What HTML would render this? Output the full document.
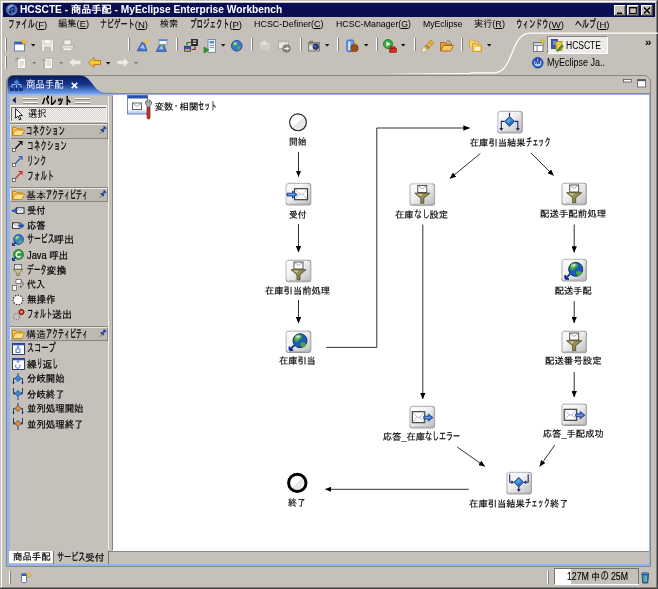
<!DOCTYPE html>
<html lang="ja"><head><meta charset="utf-8"><title>HCSCTE</title><style>
html,body{margin:0;padding:0}
body{width:658px;height:589px;overflow:hidden;position:relative;background:#c5c1ba;font-family:"Liberation Sans","IPAGothic","Noto Sans CJK JP",sans-serif}
div,svg,span.t{position:absolute}
span.t{white-space:nowrap;transform-origin:0 50%;display:block;filter:blur(0.3px)}
span.k{font-size:1.2em;display:inline-block;transform-origin:0 50%}
svg{overflow:visible}
svg text{font-family:"Liberation Sans","IPAGothic","Noto Sans CJK JP",sans-serif}
</style></head>
<body>
<div style="left:0px;top:0px;width:658px;height:589px;background:#c5c1ba;"></div>
<div style="left:1px;top:1px;width:656px;height:1px;background:#fff;"></div>
<div style="left:1px;top:1px;width:1px;height:587px;background:#fff;"></div>
<div style="left:0px;top:588px;width:658px;height:1px;background:#404040;"></div>
<div style="left:657px;top:0px;width:1px;height:589px;background:#404040;"></div>
<div style="left:1px;top:587px;width:656px;height:1px;background:#808080;"></div>
<div style="left:656px;top:1px;width:1px;height:587px;background:#808080;"></div>
<div style="left:3px;top:3px;width:652px;height:13.7px;background:#090f52;"></div>
<svg style="left:5.5px;top:4.3px" width="11.5" height="11.5" viewBox="0 0 13 13"><circle cx="6.500" cy="6.500" r="6" fill="#4468b4" stroke="#7a94cc" stroke-width="0.8"/><path d="M2.500 5.500a4.500 4.500 0 0 1 5-3" stroke="#a8c0ec" stroke-width="1.200" fill="none"/><path d="M5.500 9.500V4.500l3.500-1v4.500" stroke="#0a1a50" stroke-width="1" fill="none"/><circle cx="4.600" cy="9.500" r="1.300" fill="#0a1a50"/><circle cx="8.200" cy="8.200" r="1.200" fill="#0a1a50"/></svg>
<span class="t" style="left:19.5px;top:3.475px;font-size:10.5px;line-height:13.65px;color:#fff;font-weight:bold;transform:scaleX(0.971);">HCSCTE - 商品手配 - MyEclipse Enterprise Workbench</span>
<div style="left:614px;top:5px;width:12px;height:11px;background:#c5c1ba;"></div>
<div style="left:614px;top:5px;width:11px;height:1px;background:#fff;"></div>
<div style="left:614px;top:5px;width:1px;height:10px;background:#fff;"></div>
<div style="left:614px;top:15px;width:12px;height:1px;background:#404040;"></div>
<div style="left:625px;top:5px;width:1px;height:11px;background:#404040;"></div>
<div style="left:615px;top:14px;width:10px;height:1px;background:#808080;"></div>
<div style="left:624px;top:6px;width:1px;height:9px;background:#808080;"></div>
<svg style="left:614px;top:5px" width="12" height="11" viewBox="0 0 12 11"><rect x="3" y="7.5" width="5" height="1.6" fill="#000"/></svg>
<div style="left:626.5px;top:5px;width:12px;height:11px;background:#c5c1ba;"></div>
<div style="left:626.5px;top:5px;width:11px;height:1px;background:#fff;"></div>
<div style="left:626.5px;top:5px;width:1px;height:10px;background:#fff;"></div>
<div style="left:626.5px;top:15px;width:12px;height:1px;background:#404040;"></div>
<div style="left:637.5px;top:5px;width:1px;height:11px;background:#404040;"></div>
<div style="left:627.5px;top:14px;width:10px;height:1px;background:#808080;"></div>
<div style="left:636.5px;top:6px;width:1px;height:9px;background:#808080;"></div>
<svg style="left:626.5px;top:5px" width="12" height="11" viewBox="0 0 12 11"><rect x="2.7" y="2.5" width="6.6" height="6" fill="none" stroke="#000" stroke-width="1"/><rect x="2.2" y="2" width="7.6" height="1.4" fill="#000"/></svg>
<div style="left:640.5px;top:5px;width:12px;height:11px;background:#c5c1ba;"></div>
<div style="left:640.5px;top:5px;width:11px;height:1px;background:#fff;"></div>
<div style="left:640.5px;top:5px;width:1px;height:10px;background:#fff;"></div>
<div style="left:640.5px;top:15px;width:12px;height:1px;background:#404040;"></div>
<div style="left:651.5px;top:5px;width:1px;height:11px;background:#404040;"></div>
<div style="left:641.5px;top:14px;width:10px;height:1px;background:#808080;"></div>
<div style="left:650.5px;top:6px;width:1px;height:9px;background:#808080;"></div>
<svg style="left:640.5px;top:5px" width="12" height="11" viewBox="0 0 12 11"><path d="M3 2.5l6 6M9 2.5l-6 6" stroke="#000" stroke-width="1.5"/></svg>
<span class="t" style="left:8.3px;top:18.36px;font-size:9.6px;line-height:12.48px;color:#000;"><span class="k" style="transform:scaleX(0.580);margin-right:-19.34px;-webkit-text-stroke:0.25px currentColor">ファイル</span>(<u>F</u>)</span>
<span class="t" style="left:58px;top:18.36px;font-size:9.6px;line-height:12.48px;color:#000;transform:scaleX(0.969);">編集(<u>E</u>)</span>
<span class="t" style="left:100px;top:18.36px;font-size:9.6px;line-height:12.48px;color:#000;"><span class="k" style="transform:scaleX(0.602);margin-right:-22.92px;-webkit-text-stroke:0.24px currentColor">ナビゲート</span>(<u>N</u>)</span>
<span class="t" style="left:160px;top:18.36px;font-size:9.6px;line-height:12.48px;color:#000;transform:scaleX(0.938);">検索</span>
<span class="t" style="left:190px;top:18.36px;font-size:9.6px;line-height:12.48px;color:#000;"><span class="k" style="transform:scaleX(0.567);margin-right:-29.91px;-webkit-text-stroke:0.26px currentColor">プロジェクト</span>(<u>P</u>)</span>
<span class="t" style="left:254px;top:18.36px;font-size:9.6px;line-height:12.48px;color:#000;transform:scaleX(0.931);">HCSC-Definer(<u>C</u>)</span>
<span class="t" style="left:335.5px;top:18.36px;font-size:9.6px;line-height:12.48px;color:#000;transform:scaleX(0.913);">HCSC-Manager(<u>G</u>)</span>
<span class="t" style="left:422.7px;top:18.36px;font-size:9.6px;line-height:12.48px;color:#000;transform:scaleX(0.904);">MyEclipse</span>
<span class="t" style="left:474px;top:18.36px;font-size:9.6px;line-height:12.48px;color:#000;transform:scaleX(0.953);">実行(<u>R</u>)</span>
<span class="t" style="left:516px;top:18.36px;font-size:9.6px;line-height:12.48px;color:#000;"><span class="k" style="transform:scaleX(0.565);margin-right:-25.05px;-webkit-text-stroke:0.26px currentColor">ウィンドウ</span>(<u>W</u>)</span>
<span class="t" style="left:575px;top:18.36px;font-size:9.6px;line-height:12.48px;color:#000;"><span class="k" style="transform:scaleX(0.612);margin-right:-13.39px;-webkit-text-stroke:0.23px currentColor">ヘルプ</span>(<u>H</u>)</span>
<div style="left:5px;top:38.3px;width:1px;height:13px;background:#fff;"></div>
<div style="left:6px;top:38.3px;width:1px;height:13px;background:#808080;"></div>
<div style="left:5px;top:55.8px;width:1px;height:13px;background:#fff;"></div>
<div style="left:6px;top:55.8px;width:1px;height:13px;background:#808080;"></div>
<svg style="left:14px;top:39px" width="13" height="13" viewBox="0 0 13 13"><rect x="0.5" y="3" width="10" height="9" fill="#fff" stroke="#6a7fb0"/><rect x="0.5" y="3" width="10" height="2.5" fill="#3b62b8"/><path d="M10 0l.8 2 2 .3-1.5 1.3.4 2L10 4.6 8.2 5.6l.4-2L7.1 2.3l2-.3z" fill="#f2c230" stroke="#c89a10" stroke-width=".4"/></svg>
<svg style="left:30.8px;top:44px" width="4.4" height="2.6" viewBox="0 0 4.4 2.6"><path d="M0 0h4.400L2.200 2.600z" fill="#000"/></svg>
<svg style="left:41px;top:39px" width="13" height="13" viewBox="0 0 13 13"><rect x="0.5" y="0.5" width="12" height="12" fill="#eeedea" stroke="#bab7b0"/><rect x="3" y="0.5" width="7" height="4.5" fill="#f6f5f2" stroke="#b8b4ac" stroke-width=".6"/><rect x="3" y="7.5" width="7" height="5" fill="#c4c0b8"/></svg>
<svg style="left:61px;top:39px" width="13" height="13" viewBox="0 0 13 13"><rect x="3" y="1" width="7" height="5" fill="#f2f1ee" stroke="#b0aca4" stroke-width=".8"/><rect x="0.5" y="6" width="12" height="5" fill="#e0ddd6" stroke="#aeaaa2" stroke-width=".8"/><rect x="2.5" y="9" width="8" height="2.5" fill="#f4f3f0" stroke="#b8b4ac" stroke-width=".5"/></svg>
<div style="left:128px;top:38.3px;width:1px;height:13px;background:#fff;"></div>
<div style="left:129px;top:38.3px;width:1px;height:13px;background:#808080;"></div>
<svg style="left:136px;top:39px" width="13" height="13" viewBox="0 0 13 13"><path d="M1 12L6 3l3 2 2 7z" fill="#4a78c8" stroke="#2a4a90" stroke-width=".6"/><path d="M4 9l3-4 2 5z" fill="#a8c4f0"/><path d="M10.5 0l.7 1.8 1.8.2-1.3 1.2.3 1.8-1.5-.9-1.6.9.3-1.8L7.9 2l1.9-.2z" fill="#f2c230"/></svg>
<svg style="left:155px;top:39px" width="13" height="13" viewBox="0 0 13 13"><path d="M1 12.500L5.500 4.500l3.500 1.500 2.500 6.500z" fill="#4a78c8" stroke="#2a4a90" stroke-width=".6"/><path d="M4 10l2.500-4 2 4.500z" fill="#a8c4f0"/><rect x="4" y="0.500" width="8" height="5" fill="#f4f6fc" stroke="#6a80b0" stroke-width=".7"/><rect x="4" y="0.500" width="8" height="1.500" fill="#5a80d0"/><circle cx="7" cy="6.500" r="1.200" fill="#58b848"/></svg>
<div style="left:176px;top:38.3px;width:1px;height:13px;background:#fff;"></div>
<div style="left:177px;top:38.3px;width:1px;height:13px;background:#808080;"></div>
<svg style="left:184px;top:38.5px" width="14" height="13" viewBox="0 0 14 13"><rect x="7.500" y="0.300" width="6" height="6.500" fill="#222" stroke="#000" stroke-width=".5"/><rect x="8.800" y="1.400" width="3.400" height="1.200" fill="#e8e8e8"/><rect x="8.800" y="3.800" width="3.400" height="1.200" fill="#e8e8e8"/><rect x="0.300" y="7.200" width="6.400" height="5" fill="#2a58b0" stroke="#1a2a60" stroke-width=".6"/><rect x="0.800" y="10" width="5.400" height="1.800" fill="#e8a030"/><path d="M3 6.500V3.500H7" stroke="#1a7a2a" stroke-width="1.200" fill="none"/><path d="M7.500 10.500h3.500V7.500" stroke="#8a1818" stroke-width="1.200" fill="none"/></svg>
<svg style="left:203.5px;top:38.5px" width="12" height="14" viewBox="0 0 12 14"><rect x="4" y="0.5" width="7.5" height="13" fill="#eef2fa" stroke="#6a7a9a" stroke-width=".8"/><rect x="5.5" y="2" width="4.5" height="2.5" fill="#5a8ad8"/><rect x="5.5" y="6" width="4.5" height="1" fill="#8a9ab8"/><rect x="5.5" y="8" width="4.5" height="1" fill="#8a9ab8"/><path d="M0 8l5 3-5 3z" fill="#2a9a2a" stroke="#1a6a1a" stroke-width=".5"/></svg>
<svg style="left:220.8px;top:44px" width="4.4" height="2.6" viewBox="0 0 4.4 2.6"><path d="M0 0h4.400L2.200 2.600z" fill="#000"/></svg>
<svg style="left:231px;top:39.5px" width="11.5" height="11.5" viewBox="0 0 11.5 11.5"><circle cx="5.75" cy="5.75" r="5.4" fill="#3a78d0" stroke="#1a3a80" stroke-width=".7"/><path d="M3 2.5c1.5-1 3-.5 3.5.5s-.5 2-1.500 2.500S3.500 7 3 6 2 3.500 3 2.500zM7 6.500c1-.5 2.500 0 2.500 1S8 10 7 9.500 6.500 7 7 6.500z" fill="#58b848"/><circle cx="4" cy="3.500" r="1.300" fill="#fff" opacity=".55"/></svg>
<div style="left:251px;top:38.3px;width:1px;height:13px;background:#fff;"></div>
<div style="left:252px;top:38.3px;width:1px;height:13px;background:#808080;"></div>
<svg style="left:260px;top:39.5px" width="12" height="11.5" viewBox="0 0 12 11.5"><path d="M0.500 11V2.500l2-.5 1.500-1.500 2 1 .5 1.500 3.500.500v2" fill="#e2e0dc" stroke="#cfccc6" stroke-width=".6"/><path d="M0.500 11l2-5.500h9l-2.500 5.500z" fill="#d2d0cc" stroke="#bcb9b3" stroke-width=".6"/></svg>
<svg style="left:278px;top:39.5px" width="13" height="13" viewBox="0 0 13 13"><rect x="0.500" y="0.500" width="10" height="8" fill="#e8e6e0" stroke="#a8a49c" stroke-width=".8"/><rect x="0.500" y="0.500" width="10" height="2" fill="#c0bcb4"/><circle cx="8.500" cy="8.500" r="3.800" fill="#8a8a8a" stroke="#606060" stroke-width=".6"/><path d="M6.500 8.500h4M9 6.800l1.700 1.700L9 10.200" stroke="#fff" stroke-width="1" fill="none"/></svg>
<div style="left:300px;top:38.3px;width:1px;height:13px;background:#fff;"></div>
<div style="left:301px;top:38.3px;width:1px;height:13px;background:#808080;"></div>
<svg style="left:308px;top:39.5px" width="12" height="11.5" viewBox="0 0 12 11.5"><rect x="0.500" y="2.500" width="11" height="8.500" fill="#c4c4c4" stroke="#6a6a6a" stroke-width=".8"/><rect x="0.500" y="2.500" width="11" height="2" fill="#8a8a8a"/><rect x="1.500" y="0.800" width="3.500" height="2" fill="#777"/><rect x="1.500" y="5.500" width="3" height="4" fill="#e4e4e4"/><circle cx="7.800" cy="6.800" r="2.700" fill="#1a3aa0" stroke="#222" stroke-width=".8"/><circle cx="7.300" cy="6.300" r=".9" fill="#6a9af0"/></svg>
<svg style="left:324.8px;top:44px" width="4.4" height="2.6" viewBox="0 0 4.4 2.6"><path d="M0 0h4.400L2.200 2.600z" fill="#000"/></svg>
<div style="left:337px;top:38.3px;width:1px;height:13px;background:#fff;"></div>
<div style="left:338px;top:38.3px;width:1px;height:13px;background:#808080;"></div>
<svg style="left:345.5px;top:38.5px" width="13" height="14" viewBox="0 0 13 14"><rect x="0.800" y="1" width="7" height="11.500" rx="1.500" fill="#6aa0e8" stroke="#2a58b0" stroke-width=".8"/><rect x="2.300" y="2.500" width="2" height="8.500" fill="#d8e8fc"/><circle cx="8.500" cy="9" r="3.800" fill="#b05a20" stroke="#6a3010" stroke-width=".6"/><path d="M5.500 8c2-1 4-1 6 .5M6 11c2-1.500 4-1.500 5.500-.5" stroke="#5a2808" stroke-width=".6" fill="none"/><path d="M10.500 0l.6 1.500 1.600.2-1.200 1 .3 1.600-1.300-.8-1.400.8.300-1.600-1.200-1 1.700-.2z" fill="#f2c230"/></svg>
<svg style="left:363.8px;top:44px" width="4.4" height="2.6" viewBox="0 0 4.4 2.6"><path d="M0 0h4.400L2.200 2.600z" fill="#000"/></svg>
<div style="left:376px;top:38.3px;width:1px;height:13px;background:#fff;"></div>
<div style="left:377px;top:38.3px;width:1px;height:13px;background:#808080;"></div>
<svg style="left:382.5px;top:38.5px" width="14" height="14" viewBox="0 0 14 14"><circle cx="5" cy="5" r="4.600" fill="#3aa83a" stroke="#1a6a1a" stroke-width=".7"/><path d="M3.500 2.500l4 2.500-4 2.500z" fill="#fff"/><rect x="6.500" y="9" width="7" height="4.500" rx=".8" fill="#d03020" stroke="#801008" stroke-width=".6"/><rect x="8" y="7.800" width="4" height="1.500" fill="#d03020" stroke="#801008" stroke-width=".5"/></svg>
<svg style="left:400.8px;top:44px" width="4.4" height="2.6" viewBox="0 0 4.4 2.6"><path d="M0 0h4.400L2.200 2.600z" fill="#000"/></svg>
<div style="left:414px;top:38.3px;width:1px;height:13px;background:#fff;"></div>
<div style="left:415px;top:38.3px;width:1px;height:13px;background:#808080;"></div>
<svg style="left:420.5px;top:38.5px" width="14" height="14" viewBox="0 0 14 14"><path d="M1 13l1.500-4.500 7.500-7.500 3 3-7.500 7.500z" fill="#f0b840" stroke="#a87818" stroke-width=".7"/><path d="M4 7l3 3 1.800-1.800-3-3z" fill="#8a8a8a"/><path d="M1 13l1.500-4.500 3 3z" fill="#fdfdf8" stroke="#c0c0b8" stroke-width=".4"/><path d="M9 3.500l1.500 1.500" stroke="#7a5a10" stroke-width=".8"/></svg>
<svg style="left:440px;top:39.5px" width="14" height="12" viewBox="0 0 14 12"><path d="M0.500 11V2.500h4l1 1.500h6V6" fill="#e8a030" stroke="#9a5a10" stroke-width=".8"/><path d="M0.500 11l3-5.500h10l-3 5.500z" fill="#f8c860" stroke="#9a5a10" stroke-width=".8"/><path d="M6 2.500c1-2 4-2 5 0" stroke="#8a5a20" stroke-width=".9" fill="none"/></svg>
<div style="left:461px;top:38.3px;width:1px;height:13px;background:#fff;"></div>
<div style="left:462px;top:38.3px;width:1px;height:13px;background:#808080;"></div>
<svg style="left:469px;top:39px" width="13" height="13" viewBox="0 0 13 13"><path d="M0.500 9V1h4l1 1.500h4V4" fill="#f8d468" stroke="#d0a030" stroke-width=".8"/><path d="M3.500 12.500V4.500h4l1 1.500h4v6.500z" fill="#f8cc50" stroke="#c89820" stroke-width=".8"/><rect x="6" y="8" width="5" height="3.500" fill="#fff6d8"/></svg>
<svg style="left:486.8px;top:44px" width="4.4" height="2.6" viewBox="0 0 4.4 2.6"><path d="M0 0h4.400L2.200 2.600z" fill="#000"/></svg>
<svg style="left:14px;top:55.8px" width="12" height="13" viewBox="0 0 12 13"><rect x="3.500" y="2.500" width="8" height="10" fill="#fafaf8" stroke="#b4b0a8" stroke-width=".8"/><path d="M5 6h5M5 8h5M5 10h3" stroke="#b8b4ac" stroke-width=".8"/><path d="M1 5l3-3M4 2v2.500M4 2H1.500" stroke="#9a968e" stroke-width=".9" fill="none"/><path d="M8 0l.5 1.200 1.300.1-1 .9.300 1.300L8 2.800l-1.100.7.300-1.300-1-.9 1.300-.1z" fill="#e8e4d8"/></svg>
<svg style="left:31.8px;top:61.5px" width="4.4" height="2.6" viewBox="0 0 4.4 2.6"><path d="M0 0h4.400L2.200 2.600z" fill="#808080"/></svg>
<svg style="left:41px;top:55.8px" width="12" height="13" viewBox="0 0 12 13"><rect x="3.500" y="2.500" width="8" height="10" fill="#fafaf8" stroke="#b4b0a8" stroke-width=".8"/><path d="M5 5h5M5 7h5M5 9h5" stroke="#b8b4ac" stroke-width=".8"/><path d="M3 12V3M1 5l2-2.500L5 5" stroke="#aaa69e" stroke-width="1" fill="none"/></svg>
<svg style="left:59.3px;top:61.5px" width="4.4" height="2.6" viewBox="0 0 4.4 2.6"><path d="M0 0h4.400L2.200 2.600z" fill="#808080"/></svg>
<svg style="left:69px;top:57.8px" width="12" height="9" viewBox="0 0 12 9"><path d="M0.500 4.500L5 0.500v2.500h6.500v3H5v2.500z" fill="#efeeea" stroke="#dcd9d3" stroke-width=".8"/></svg>
<svg style="left:87.5px;top:56.8px" width="13" height="11" viewBox="0 0 13 11"><path d="M0.500 5.500L6 0.500v3h6.500v4H6v3z" fill="#f8c830" stroke="#b07808" stroke-width=".9"/></svg>
<svg style="left:105.8px;top:61.5px" width="4.4" height="2.6" viewBox="0 0 4.4 2.6"><path d="M0 0h4.400L2.200 2.600z" fill="#000"/></svg>
<svg style="left:116.5px;top:57.8px" width="12" height="9" viewBox="0 0 12 9"><path d="M11.500 4.500L7 0.500v2.500H0.500v3H7v2.500z" fill="#efeeea" stroke="#dcd9d3" stroke-width=".8"/></svg>
<svg style="left:133.8px;top:61.5px" width="4.4" height="2.6" viewBox="0 0 4.4 2.6"><path d="M0 0h4.400L2.200 2.600z" fill="#808080"/></svg>
<svg style="left:470px;top:29.4px" width="188" height="46" viewBox="0 0 188 46"><path d="M0 43.800H24C44 43.800 40 4.200 60 4.200H188" fill="none" stroke="#fff" stroke-width="1.200"/></svg>
<div style="left:380px;top:72.6px;width:90px;height:1.2px;background:transparent;background:linear-gradient(90deg,rgba(255,255,255,0),rgba(255,255,255,.9) 65%,#fff)"></div>
<svg style="left:533px;top:39px" width="12" height="13" viewBox="0 0 12 13"><rect x="0.500" y="3.500" width="9.500" height="9" fill="#fff" stroke="#6a6a6a" stroke-width=".9"/><path d="M0.500 6.500h9.500M4 6.500v6" stroke="#6a6a6a" stroke-width=".8"/><rect x="1" y="4" width="8.500" height="2" fill="#c8d4ec"/><path d="M9.500 0l.7 1.700 1.800.2-1.400 1.200.4 1.800-1.500-1-1.500 1 .4-1.800L7 1.900l1.800-.2z" fill="#f2c230" stroke="#b08810" stroke-width=".3"/></svg>
<div style="left:547px;top:36px;width:61px;height:17.5px;background:#eeece8;border:1px solid #8a867e;border-right-color:#fff;border-bottom-color:#fff;box-sizing:border-box"></div>
<svg style="left:550.5px;top:38.5px" width="12" height="13" viewBox="0 0 12 13"><rect x="0.500" y="0.500" width="6" height="9" fill="#3a5ab0" stroke="#1a2a70" stroke-width=".7"/><rect x="5" y="2.500" width="6" height="9" fill="#f2c838" stroke="#a07808" stroke-width=".7"/><path d="M2 3h3M2 5h3" stroke="#c8d8f8" stroke-width=".8"/><path d="M6 12.500l1-2.500 4-4 1.300 1.300-4 4z" fill="#3a9a3a" stroke="#1a5a1a" stroke-width=".5"/></svg>
<span class="t" style="left:566px;top:38.5px;font-size:10px;line-height:13px;color:#000;transform:scaleX(0.851);">HCSCTE</span>
<span class="t" style="left:644.8px;top:36.3px;font-size:10px;line-height:13px;color:#000;font-weight:bold;transform:scaleX(1.169);">»</span>
<svg style="left:532px;top:56.5px" width="11.5" height="11.5" viewBox="0 0 11.5 11.5"><circle cx="5.750" cy="5.750" r="5.200" fill="#2a6ae0" stroke="#0a2a90" stroke-width=".9"/><circle cx="5.750" cy="5.750" r="3.500" fill="#b0d0ff"/></svg>
<span class="t" style="left:535px;top:58.075px;font-size:6.5px;line-height:8.45px;color:#0a1a70;font-weight:bold;transform:scaleX(1.014);">M</span>
<span class="t" style="left:547px;top:55.8px;font-size:10px;line-height:13px;color:#000;transform:scaleX(0.900);">MyEclipse Ja..</span>
<div style="left:6.3px;top:75px;width:645px;height:492px;background:#c5c1ba;border:1px solid #8a867e;border-radius:7px 7px 0 0;box-sizing:border-box"></div>
<svg style="left:6.3px;top:75px" width="110" height="21" viewBox="0 0 110 21"><defs><linearGradient id="tg" x1="0" y1="0" x2="0" y2="1"><stop offset="0" stop-color="#0a1a5c"/><stop offset="0.450" stop-color="#15368c"/><stop offset="0.800" stop-color="#5a88d8"/><stop offset="1" stop-color="#8db2f0"/></linearGradient></defs><path d="M1.500 20.500V7C1.500 3 4 0.500 8 0.500H74C86 0.500 87 17.700 100 17.700H110V20.500z" fill="url(#tg)"/></svg>
<div style="left:100px;top:92.8px;width:550.5px;height:1px;background:#8a867e;"></div>
<div style="left:7.3px;top:93.8px;width:643.2px;height:1.7px;background:#8eb6f4;"></div>
<div style="left:7.3px;top:95px;width:2.5px;height:471px;background:#8eb6f4;"></div>
<div style="left:648.7px;top:95px;width:1.8px;height:471px;background:#8eb6f4;"></div>
<div style="left:7.3px;top:563.8px;width:643.2px;height:2.6px;background:#8eb6f4;"></div>
<svg style="left:10px;top:78.5px" width="13" height="12" viewBox="0 0 13 12"><path d="M2 9V5.500h9V9M6.500 5v4" fill="none" stroke="#b8c8f0" stroke-width=".9"/><path d="M6.500 0.300l3 3-3 3-3-3z" fill="#3a8ad8" stroke="#1a4aa0" stroke-width=".5"/><rect x="0.500" y="9" width="3" height="2.800" fill="#1a3a9a" stroke="#0a1a60" stroke-width=".5"/><rect x="5" y="9" width="3" height="2.800" fill="#1a3a9a" stroke="#0a1a60" stroke-width=".5"/><rect x="9.500" y="9" width="3" height="2.800" fill="#1a3a9a" stroke="#0a1a60" stroke-width=".5"/></svg>
<span class="t" style="left:25.7px;top:77.575px;font-size:10.5px;line-height:13.65px;color:#fff;transform:scaleX(0.893);">商品手配</span>
<svg style="left:70.8px;top:81.5px" width="6.6" height="6.6" viewBox="0 0 6.6 6.6"><path d="M0.800 0.800l5.400 5.400M6.200 0.800L0.800 6.200" stroke="#fff" stroke-width="1.700"/></svg>
<svg style="left:623px;top:78.5px" width="9" height="3.5" viewBox="0 0 9 3.5"><rect x="0.500" y="0.500" width="8" height="2.500" fill="#fff" stroke="#555" stroke-width=".8"/></svg>
<svg style="left:637px;top:78.5px" width="9" height="8.5" viewBox="0 0 9 8.5"><rect x="0.500" y="0.500" width="8" height="7.500" fill="#fff" stroke="#6a6a6a" stroke-width=".9"/><rect x="0.500" y="0.500" width="8" height="1.600" fill="#555"/></svg>
<div style="left:9.8px;top:95.5px;width:98px;height:455px;background:#c5c1ba;"></div>
<svg style="left:11.8px;top:97px" width="4" height="6.4" viewBox="0 0 4 6.4"><path d="M3.800 0L0.300 3.200l3.500 3.200z" fill="#0a1a60"/></svg>
<div style="left:23px;top:98px;width:15px;height:1px;background:#fff;"></div>
<div style="left:23px;top:99px;width:15px;height:1px;background:#8a867e;"></div>
<div style="left:23px;top:101.5px;width:15px;height:1px;background:#fff;"></div>
<div style="left:23px;top:102.5px;width:15px;height:1px;background:#8a867e;"></div>
<div style="left:75px;top:98px;width:15px;height:1px;background:#fff;"></div>
<div style="left:75px;top:99px;width:15px;height:1px;background:#8a867e;"></div>
<div style="left:75px;top:101.5px;width:15px;height:1px;background:#fff;"></div>
<div style="left:75px;top:102.5px;width:15px;height:1px;background:#8a867e;"></div>
<span class="t" style="left:42px;top:95.29px;font-size:9.4px;line-height:12.22px;color:#000;font-weight:bold;"><span class="k" style="transform:scaleX(0.655);margin-right:-15.56px;-webkit-text-stroke:0.21px currentColor">パレット</span>
</span><div style="left:9.8px;top:105.4px;width:97.6px;height:16.4px;background:#f2f0ec;"></div>
<div style="left:11px;top:106.6px;width:95.2px;height:14.2px;background:#fff;border-top:1px solid #77736c;border-left:1px solid #77736c;box-sizing:border-box;background-image:linear-gradient(45deg,#d6d3cd 25%,transparent 25%,transparent 75%,#d6d3cd 75%),linear-gradient(45deg,#d6d3cd 25%,transparent 25%,transparent 75%,#d6d3cd 75%);background-size:2px 2px;background-position:0 0,1px 1px;background-color:#f6f5f3"></div>
<svg style="left:15px;top:108.3px" width="8" height="12.5" viewBox="0 0 7 11"><path d="M0.500 0.500v8.500l2-2 1.500 3.500 1.300-.6-1.500-3.300h2.700z" fill="#fff" stroke="#000" stroke-width=".75"/></svg>
<span class="t" style="left:27.5px;top:107px;font-size:10px;line-height:13px;color:#000;transform:scaleX(0.925);">選択</span>
<div style="left:9.8px;top:124px;width:98px;height:14.5px;background:#bdb9b1;border:1px solid #8a867e;border-left-color:#e8e6e2;border-top-color:#e8e6e2;box-sizing:border-box"></div>
<div style="left:9.8px;top:123px;width:98px;height:1px;background:#8a867e;"></div>
<svg style="left:12px;top:126px" width="13" height="10" viewBox="0 0 13 10"><path d="M0.500 9.500V1.500h3.500l1 1.300h4.500V4" fill="#f8c850" stroke="#c88208" stroke-width=".9"/><path d="M0.500 9.500L3 4h9.500L10 9.500z" fill="#fce090" stroke="#c88208" stroke-width=".9"/></svg>
<span class="t" style="left:26px;top:125px;font-size:10px;line-height:13px;color:#000;"><span class="k" style="transform:scaleX(0.542);margin-right:-33.00px;-webkit-text-stroke:0.27px currentColor">コネクション</span>
</span><svg style="left:98.5px;top:127px" width="7" height="8" viewBox="0 0 7 8"><g transform="rotate(40 3.500 3.500)"><rect x="1.800" y="-0.800" width="3.400" height="1.300" fill="#1a2a8a"/><rect x="2.500" y="0.500" width="2" height="2.600" fill="#2a44b0"/><rect x="1.300" y="3.100" width="4.400" height="1.200" fill="#1a2a8a"/><path d="M3.500 4.300V8" stroke="#555" stroke-width=".7"/></g></svg>
<div style="left:9.8px;top:187.5px;width:98px;height:14.5px;background:#bdb9b1;border:1px solid #8a867e;border-left-color:#e8e6e2;border-top-color:#e8e6e2;box-sizing:border-box"></div>
<div style="left:9.8px;top:186.5px;width:98px;height:1px;background:#8a867e;"></div>
<svg style="left:12px;top:189.5px" width="13" height="10" viewBox="0 0 13 10"><path d="M0.500 9.500V1.500h3.500l1 1.300h4.500V4" fill="#f8c850" stroke="#c88208" stroke-width=".9"/><path d="M0.500 9.500L3 4h9.500L10 9.500z" fill="#fce090" stroke="#c88208" stroke-width=".9"/></svg>
<span class="t" style="left:26px;top:188.5px;font-size:10px;line-height:13px;color:#000;">基本<span class="k" style="transform:scaleX(0.500);margin-right:-42.00px;-webkit-text-stroke:0.30px currentColor">アクティビティ</span>
</span><svg style="left:98.5px;top:190.5px" width="7" height="8" viewBox="0 0 7 8"><g transform="rotate(40 3.500 3.500)"><rect x="1.800" y="-0.800" width="3.400" height="1.300" fill="#1a2a8a"/><rect x="2.500" y="0.500" width="2" height="2.600" fill="#2a44b0"/><rect x="1.300" y="3.100" width="4.400" height="1.200" fill="#1a2a8a"/><path d="M3.500 4.300V8" stroke="#555" stroke-width=".7"/></g></svg>
<div style="left:9.8px;top:326.5px;width:98px;height:14.5px;background:#bdb9b1;border:1px solid #8a867e;border-left-color:#e8e6e2;border-top-color:#e8e6e2;box-sizing:border-box"></div>
<div style="left:9.8px;top:325.5px;width:98px;height:1px;background:#8a867e;"></div>
<svg style="left:12px;top:328.5px" width="13" height="10" viewBox="0 0 13 10"><path d="M0.500 9.500V1.500h3.500l1 1.300h4.500V4" fill="#f8c850" stroke="#c88208" stroke-width=".9"/><path d="M0.500 9.500L3 4h9.500L10 9.500z" fill="#fce090" stroke="#c88208" stroke-width=".9"/></svg>
<span class="t" style="left:26px;top:327.5px;font-size:10px;line-height:13px;color:#000;">構造<span class="k" style="transform:scaleX(0.500);margin-right:-42.00px;-webkit-text-stroke:0.30px currentColor">アクティビティ</span>
</span><svg style="left:98.5px;top:329.5px" width="7" height="8" viewBox="0 0 7 8"><g transform="rotate(40 3.500 3.500)"><rect x="1.800" y="-0.800" width="3.400" height="1.300" fill="#1a2a8a"/><rect x="2.500" y="0.500" width="2" height="2.600" fill="#2a44b0"/><rect x="1.300" y="3.100" width="4.400" height="1.200" fill="#1a2a8a"/><path d="M3.500 4.300V8" stroke="#555" stroke-width=".7"/></g></svg>
<svg style="left:12px;top:140px" width="12" height="12" viewBox="0 0 12 12"><path d="M2.500 9.500L9.500 2" stroke="#000" stroke-width="1.100"/><path d="M6.500 1.500h3.500v3.500" fill="none" stroke="#000" stroke-width="1.100"/><rect x="0.500" y="8.500" width="3" height="3" fill="#fff" stroke="#444" stroke-width=".7"/></svg>
<span class="t" style="left:26.5px;top:139.5px;font-size:10px;line-height:13px;color:#000;-webkit-text-stroke:0.2px #000;"><span class="k" style="transform:scaleX(0.556);margin-right:-32.00px;-webkit-text-stroke:0.27px currentColor">コネクション</span>
</span><svg style="left:12px;top:155px" width="12" height="12" viewBox="0 0 12 12"><path d="M2.500 9.500L9.500 2" stroke="#2a5ac8" stroke-width="1.100"/><path d="M6.500 1.500h3.500v3.500" fill="none" stroke="#2a5ac8" stroke-width="1.100"/><rect x="0.500" y="8.500" width="3" height="3" fill="#fff" stroke="#444" stroke-width=".7"/></svg>
<span class="t" style="left:26.5px;top:154.5px;font-size:10px;line-height:13px;color:#000;-webkit-text-stroke:0.2px #000;"><span class="k" style="transform:scaleX(0.542);margin-right:-16.50px;-webkit-text-stroke:0.27px currentColor">リンク</span>
</span><svg style="left:12px;top:170px" width="12" height="12" viewBox="0 0 12 12"><path d="M2.500 9.500L9.500 2" stroke="#d02818" stroke-width="1.100"/><path d="M6.500 1.500h3.500v3.500" fill="none" stroke="#d02818" stroke-width="1.100"/><rect x="0.500" y="8.500" width="3" height="3" fill="#fff" stroke="#444" stroke-width=".7"/></svg>
<span class="t" style="left:26.5px;top:169.5px;font-size:10px;line-height:13px;color:#000;-webkit-text-stroke:0.2px #000;"><span class="k" style="transform:scaleX(0.562);margin-right:-21.00px;-webkit-text-stroke:0.26px currentColor">フォルト</span>
</span><svg style="left:12px;top:206px" width="13" height="9" viewBox="0 0 13 9"><rect x="4.500" y="1.800" width="7.500" height="5.500" fill="#fff" stroke="#222" stroke-width=".9"/><path d="M4.500 1.800l3.750 3L12 1.800" fill="none" stroke="#555" stroke-width=".6"/><path d="M0 4h3V2.300l2.700 2.400L3 7.100V5.400H0z" fill="#2a5ac8" stroke="#0a2a80" stroke-width=".4"/></svg>
<span class="t" style="left:26.5px;top:203.5px;font-size:10px;line-height:13px;color:#000;transform:scaleX(0.925);-webkit-text-stroke:0.2px #000;">受付</span>
<svg style="left:12px;top:221px" width="13" height="9" viewBox="0 0 13 9"><rect x="0.500" y="1.800" width="7.500" height="5.500" fill="#fff" stroke="#222" stroke-width=".9"/><path d="M0.500 1.800l3.750 3L8 1.800" fill="none" stroke="#555" stroke-width=".6"/><path d="M6.500 4h3V2.300l2.700 2.400-2.700 2.400V5.400h-3z" fill="#2a5ac8" stroke="#0a2a80" stroke-width=".4"/></svg>
<span class="t" style="left:26.5px;top:218.5px;font-size:10px;line-height:13px;color:#000;transform:scaleX(0.925);-webkit-text-stroke:0.2px #000;">応答</span>
<svg style="left:12px;top:233.5px" width="12" height="12" viewBox="0 0 12 12"><circle cx="6.500" cy="5.500" r="5" fill="#3a78d8" stroke="#1a3a88" stroke-width=".7"/><path d="M4 2.500c1.500-1 3-.5 3.500.5s-.5 2-1.500 2.500S4 7 3.500 6 3 3.500 4 2.500zM7.500 6.500c1-.5 2.500 0 2.500 1S8.500 10 7.500 9.500 7 7 7.500 6.500z" fill="#58b848"/><circle cx="5" cy="3.500" r="1.300" fill="#fff" opacity=".5"/><path d="M0.500 11.500l3.500-3.500M0.500 11.500V8.800M0.500 11.500H3.200" stroke="#0a2a90" stroke-width="1.200" fill="none"/></svg>
<span class="t" style="left:26.5px;top:233px;font-size:10px;line-height:13px;color:#000;-webkit-text-stroke:0.2px #000;"><span class="k" style="transform:scaleX(0.573);margin-right:-20.50px;-webkit-text-stroke:0.26px currentColor">サービス</span>呼出</span>
<svg style="left:12px;top:249px" width="12" height="12" viewBox="0 0 12 12"><circle cx="6.500" cy="5.500" r="5" fill="#3aa048" stroke="#1a6a28" stroke-width=".7"/><path d="M8.500 3.800a2.500 2.500 0 1 0 0 3.400" fill="none" stroke="#fff" stroke-width="1.300"/><path d="M0.500 11.500l3.500-3.500M0.500 11.500V8.800M0.500 11.500H3.200" stroke="#0a2a90" stroke-width="1.200" fill="none"/></svg>
<span class="t" style="left:26.5px;top:248.5px;font-size:10px;line-height:13px;color:#000;transform:scaleX(0.934);-webkit-text-stroke:0.2px #000;">Java 呼出</span>
<svg style="left:12px;top:264px" width="12" height="12" viewBox="0 0 12 12"><rect x="2.500" y="0.500" width="7" height="4.500" fill="#fff" stroke="#444" stroke-width=".7"/><path d="M2.500 0.500l3.500 2.700L9.500 0.500" fill="none" stroke="#666" stroke-width=".5"/><path d="M1 5.500h10L7.200 9v2.500H4.800V9z" fill="#c8c090" stroke="#6a6430" stroke-width=".7"/></svg>
<span class="t" style="left:26.5px;top:263.5px;font-size:10px;line-height:13px;color:#000;-webkit-text-stroke:0.2px #000;"><span class="k" style="transform:scaleX(0.556);margin-right:-16.00px;-webkit-text-stroke:0.27px currentColor">データ</span>変換</span>
<svg style="left:12px;top:278.5px" width="13" height="12" viewBox="0 0 13 12"><rect x="4" y="0.500" width="5" height="4" fill="#fff" stroke="#555" stroke-width=".7"/><rect x="0.500" y="6.500" width="4" height="5" fill="#fff" stroke="#555" stroke-width=".7"/><path d="M9 2.500c3 0 3 5-1 5.500l1-1.500M8 8l1.500 1" fill="none" stroke="#444" stroke-width=".7"/></svg>
<span class="t" style="left:26.5px;top:278px;font-size:10px;line-height:13px;color:#000;transform:scaleX(0.900);-webkit-text-stroke:0.2px #000;">代入</span>
<svg style="left:12px;top:293.5px" width="12" height="12" viewBox="0 0 12 12"><circle cx="6" cy="6" r="4.800" fill="#fff" stroke="#222" stroke-width="1.100" stroke-dasharray="1.500 1.200"/></svg>
<span class="t" style="left:26.5px;top:293px;font-size:10px;line-height:13px;color:#000;transform:scaleX(0.950);-webkit-text-stroke:0.2px #000;">無操作</span>
<svg style="left:12px;top:308.8px" width="13" height="12" viewBox="0 0 13 12"><circle cx="4.500" cy="7.500" r="3.200" fill="none" stroke="#555" stroke-width=".8" stroke-dasharray="1.200 1"/><circle cx="9.500" cy="3" r="2.600" fill="#d02818" stroke="#400" stroke-width=".7"/><path d="M8.300 1.800l2.400 2.400M10.700 1.800L8.300 4.200" stroke="#fff" stroke-width=".7"/></svg>
<span class="t" style="left:26.5px;top:308.3px;font-size:10px;line-height:13px;color:#000;-webkit-text-stroke:0.2px #000;"><span class="k" style="transform:scaleX(0.531);margin-right:-22.50px;-webkit-text-stroke:0.28px currentColor">フォルト</span>送出</span>
<svg style="left:12px;top:342.5px" width="13" height="12" viewBox="0 0 13 12"><rect x="0.500" y="0.500" width="12" height="11" fill="#fff" stroke="#1a2a60" stroke-width=".9"/><rect x="0.500" y="0.500" width="12" height="1.800" fill="#2a50b0"/><rect x="4" y="6" width="4" height="3.500" fill="#fff" stroke="#2a5ac8" stroke-width=".8"/><path d="M6 1.500v3.500M4.800 3.800L6 5l1.200-1.200" stroke="#2a5ac8" stroke-width=".8" fill="none"/></svg>
<span class="t" style="left:26.5px;top:342px;font-size:10px;line-height:13px;color:#000;-webkit-text-stroke:0.2px #000;"><span class="k" style="transform:scaleX(0.594);margin-right:-19.50px;-webkit-text-stroke:0.24px currentColor">スコープ</span>
</span><svg style="left:12px;top:358px" width="13" height="12" viewBox="0 0 13 12"><rect x="0.500" y="0.500" width="12" height="11" fill="#fff" stroke="#1a2a60" stroke-width=".9"/><rect x="0.500" y="0.500" width="12" height="1.800" fill="#2a50b0"/><path d="M6 1.500v3M4.800 3.300L6 4.500l1.200-1.200" stroke="#2a5ac8" stroke-width=".8" fill="none"/><path d="M4 6.500a2.300 2.300 0 1 0 3.500 0" fill="none" stroke="#2a5ac8" stroke-width=".8"/></svg>
<span class="t" style="left:26.5px;top:357.5px;font-size:10px;line-height:13px;color:#000;transform:scaleX(0.969);-webkit-text-stroke:0.2px #000;">繰<span class="k" style="transform:scaleX(0.500);margin-right:-6.00px;-webkit-text-stroke:0.30px currentColor">り</span>返<span class="k" style="transform:scaleX(0.500);margin-right:-6.00px;-webkit-text-stroke:0.30px currentColor">し</span>
</span><svg style="left:12px;top:372.5px" width="12" height="12" viewBox="0 0 12 12"><path d="M6 0V2.500M3 5.500H1.500V10.500M9 5.500H10.500V10.500" fill="none" stroke="#1a2a6a" stroke-width=".9"/><path d="M0.300 9.300l1.200 2.200 1.200-2.200zM9.300 9.300l1.200 2.200 1.200-2.200z" fill="#1a2a6a"/><path d="M6 2.300l3.200 3.200-3.200 3.200-3.200-3.200z" fill="#3a86d8" stroke="#1a3a78" stroke-width=".6"/></svg>
<span class="t" style="left:26.5px;top:372px;font-size:10px;line-height:13px;color:#000;transform:scaleX(0.938);-webkit-text-stroke:0.2px #000;">分岐開始</span>
<svg style="left:12px;top:388px" width="12" height="12" viewBox="0 0 12 12"><path d="M1.500 0V5.500H2.500M10.500 0V5.500H9.500M6 8.500V12" fill="none" stroke="#1a2a6a" stroke-width=".9"/><path d="M1.800 4l2 1.500-2 1.500zM10.200 4l-2 1.500 2 1.500z" fill="#1a2a6a"/><path d="M6 2.300l3.200 3.200-3.200 3.200-3.200-3.200z" fill="#3a86d8" stroke="#1a3a78" stroke-width=".6"/></svg>
<span class="t" style="left:26.5px;top:387.5px;font-size:10px;line-height:13px;color:#000;transform:scaleX(0.938);-webkit-text-stroke:0.2px #000;">分岐終了</span>
<svg style="left:12px;top:402.5px" width="12" height="12" viewBox="0 0 12 12"><path d="M6 0V2.500M3 5.500H1.500V10.500M9 5.500H10.500V10.500" fill="none" stroke="#1a2a6a" stroke-width=".9"/><path d="M0.300 9.300l1.200 2.200 1.200-2.200zM9.300 9.300l1.200 2.200 1.200-2.200z" fill="#1a2a6a"/><path d="M6 2.300l3.200 3.200-3.200 3.200-3.200-3.200z" fill="#d89030" stroke="#1a3a78" stroke-width=".6"/></svg>
<span class="t" style="left:26.5px;top:402px;font-size:10px;line-height:13px;color:#000;transform:scaleX(0.942);-webkit-text-stroke:0.2px #000;">並列処理開始</span>
<svg style="left:12px;top:418.3px" width="12" height="12" viewBox="0 0 12 12"><path d="M1.500 0V5.500H2.500M10.500 0V5.500H9.500M6 8.500V12" fill="none" stroke="#1a2a6a" stroke-width=".9"/><path d="M1.800 4l2 1.500-2 1.500zM10.200 4l-2 1.500 2 1.500z" fill="#1a2a6a"/><path d="M6 2.300l3.200 3.200-3.200 3.200-3.200-3.200z" fill="#d89030" stroke="#1a3a78" stroke-width=".6"/></svg>
<span class="t" style="left:26.5px;top:417.8px;font-size:10px;line-height:13px;color:#000;transform:scaleX(0.942);-webkit-text-stroke:0.2px #000;">並列処理終了</span>
<div style="left:107.8px;top:95.5px;width:1.2px;height:454px;background:#f4f2ee;"></div>
<div style="left:112px;top:95.5px;width:1px;height:454px;background:#808080;"></div>
<div style="left:113px;top:95.1px;width:535.7px;height:455.9px;background:#fff;"></div>
<div style="left:9.8px;top:551px;width:638.4px;height:13.2px;background:#c5c1ba;"></div>
<div style="left:108px;top:550.7px;width:540.7px;height:1px;background:#8a867e;"></div>
<div style="left:8.5px;top:551.3px;width:44.5px;height:11.8px;background:#fff;"></div>
<div style="left:53px;top:551.3px;width:1px;height:12.5px;background:#77736c;"></div>
<div style="left:107.5px;top:551.3px;width:1px;height:12.5px;background:#77736c;"></div>
<span class="t" style="left:13px;top:550.93px;font-size:9.8px;line-height:12.74px;color:#000;transform:scaleX(0.957);-webkit-text-stroke:0.2px #000;">商品手配</span>
<span class="t" style="left:56.5px;top:550.93px;font-size:9.8px;line-height:12.74px;color:#000;-webkit-text-stroke:0.2px #000;"><span class="k" style="transform:scaleX(0.604);margin-right:-18.59px;-webkit-text-stroke:0.24px currentColor">サービス</span>受付</span>
<div style="left:9px;top:570.5px;width:1px;height:13px;background:#fff;"></div>
<div style="left:10px;top:570.5px;width:1px;height:13px;background:#808080;"></div>
<svg style="left:21px;top:572px" width="11" height="11" viewBox="0 0 11 11"><rect x="0.500" y="1.500" width="5" height="9" rx="1" fill="#fff" stroke="#3a5a9a" stroke-width=".8"/><rect x="1" y="2" width="4" height="2" fill="#3a5ab8"/><path d="M8 0.500l2.500 2.500L8 5.500 5.500 3z" fill="#f8c040" stroke="#b07808" stroke-width=".5"/></svg>
<div style="left:547px;top:570.5px;width:1px;height:13px;background:#fff;"></div>
<div style="left:548px;top:570.5px;width:1px;height:13px;background:#808080;"></div>
<div style="left:554px;top:567.8px;width:85px;height:17.2px;background:#c5c1ba;border:1px solid #77736c;border-right-color:#fff;border-bottom-color:#fff;box-sizing:border-box"></div>
<div style="left:555px;top:568.8px;width:16px;height:15.2px;background:#fff;"></div>
<div style="left:638.3px;top:568px;width:1px;height:16px;background:#77736c;"></div>
<span class="t" style="left:566.7px;top:569.67px;font-size:10.2px;line-height:13.26px;color:#000;transform:scaleX(0.860);-webkit-text-stroke:0.15px #000;">127M 中<span class="k" style="transform:scaleX(0.800);margin-right:-2.45px;-webkit-text-stroke:0.12px currentColor">の</span> 25M</span>
<svg style="left:640.5px;top:570.5px" width="8.5" height="12.5" viewBox="0 0 8.5 12.5"><path d="M1 3h6.500l-.7 9H1.700z" fill="#2a6cc8" stroke="#123a80" stroke-width=".8"/><path d="M0.500 2.800c0-1.500 7.500-1.500 7.500 0" fill="#5a98e8" stroke="#123a80" stroke-width=".7"/><path d="M3 4.500v6.500M4.300 4.500v6.500M5.600 4.500v6.500" stroke="#9ce070" stroke-width=".7"/></svg>
<svg style="left:127px;top:95px" width="25" height="24" viewBox="0 0 25 24"><defs><linearGradient id="vg" x1="0" y1="0" x2="0" y2="1"><stop offset="0" stop-color="#fff"/><stop offset="0.700" stop-color="#fff"/><stop offset="1" stop-color="#a8c4f0"/></linearGradient></defs><rect x="0.500" y="0.500" width="20" height="18.500" fill="url(#vg)" stroke="#6a80b0" stroke-width=".9"/><rect x="0.500" y="0.500" width="20" height="3" fill="#2a50b0"/><rect x="5.500" y="8" width="9" height="6.500" fill="#fff" stroke="#555" stroke-width=".9"/><path d="M5.500 8l4.500 3.500L14.500 8" fill="none" stroke="#777" stroke-width=".7"/><path d="M20 12.500v10a1.500 1.500 0 0 0 3 0v-10z" fill="#d03020" stroke="#601008" stroke-width=".6"/><path d="M20 12.500h3v-2a3 3 0 1 0-3 0z" fill="#b4b4b4" stroke="#333" stroke-width=".7"/><path d="M20.600 4.800v2.400h1.800V4.800" fill="#f4f4f4" stroke="#333" stroke-width=".5"/></svg>
<span class="t" style="left:154.8px;top:100.455px;font-size:9.3px;line-height:12.09px;color:#000;-webkit-text-stroke:0.15px #000;">変数<span class="k" style="transform:scaleX(0.556);margin-right:-4.95px;-webkit-text-stroke:0.27px currentColor">・</span>相関<span class="k" style="transform:scaleX(0.556);margin-right:-14.86px;-webkit-text-stroke:0.27px currentColor">セット</span>
</span><svg style="left:0;top:0" width="658" height="589" viewBox="0 0 658 589"><defs><linearGradient id="bx" x1="0" y1="0" x2="1" y2="1"><stop offset="0" stop-color="#ffffff"/><stop offset="0.400" stop-color="#f2f2f2"/><stop offset="1" stop-color="#bcbcbc"/></linearGradient><linearGradient id="cg" x1="0" y1="0" x2="1" y2="1"><stop offset="0" stop-color="#fff"/><stop offset="0.500" stop-color="#fff"/><stop offset="0.520" stop-color="#e4e4e4"/><stop offset="1" stop-color="#f4f4f4"/></linearGradient><marker id="ah" markerWidth="6.500" markerHeight="5.400" refX="6" refY="2.700" orient="auto" markerUnits="userSpaceOnUse"><path d="M0 0L6.500 2.700L0 5.400z" fill="#000"/></marker></defs><path d="M298.500 152V176.500" fill="none" stroke="#1a1a1a" stroke-width=".9" marker-end="url(#ah)"/><path d="M298.500 224V252" fill="none" stroke="#1a1a1a" stroke-width=".9" marker-end="url(#ah)"/><path d="M298.500 300V323" fill="none" stroke="#1a1a1a" stroke-width=".9" marker-end="url(#ah)"/><path d="M326.300 347.400H376.800V128H469.400" fill="none" stroke="#1a1a1a" stroke-width=".9" marker-end="url(#ah)"/><path d="M480.400 153.500L450 178.400" fill="none" stroke="#1a1a1a" stroke-width=".9" marker-end="url(#ah)"/><path d="M531 153L553.500 175.500" fill="none" stroke="#1a1a1a" stroke-width=".9" marker-end="url(#ah)"/><path d="M422.800 224.500V398.800" fill="none" stroke="#1a1a1a" stroke-width=".9" marker-end="url(#ah)"/><path d="M574.200 224.500V252.300" fill="none" stroke="#1a1a1a" stroke-width=".9" marker-end="url(#ah)"/><path d="M574.200 301V322.800" fill="none" stroke="#1a1a1a" stroke-width=".9" marker-end="url(#ah)"/><path d="M574.200 372V397" fill="none" stroke="#1a1a1a" stroke-width=".9" marker-end="url(#ah)"/><path d="M457.200 447L484.700 466.300" fill="none" stroke="#1a1a1a" stroke-width=".9" marker-end="url(#ah)"/><path d="M554.700 445.200L539.800 466.300" fill="none" stroke="#1a1a1a" stroke-width=".9" marker-end="url(#ah)"/><path d="M468.800 489.300H325.400" fill="none" stroke="#1a1a1a" stroke-width=".9" marker-end="url(#ah)"/><circle cx="298" cy="122.300" r="8.400" fill="url(#cg)" stroke="#222" stroke-width="1.100"/><circle cx="297.300" cy="482.900" r="8.700" fill="url(#cg)" stroke="#000" stroke-width="3"/><rect x="286.25" y="183.45" width="24.500" height="21.500" rx="2.500" fill="url(#bx)" stroke="#9a9a9a" stroke-width="1.100"/><path d="M289 203.95h19a2.500 2.500 0 0 0 2.500-2.500v-15" fill="none" stroke="#b0b0b0" stroke-width="1"/><path d="M286.25 202.45v-17a2.500 2.500 0 0 1 2.500-2.500h19" fill="none" stroke="#e2e2e2" stroke-width="1"/><g transform="translate(298.5,194.2)"><rect x="-4" y="-5.500" width="13" height="11" fill="#fff" stroke="#333" stroke-width="1.100"/><path d="M-4 -5.500l5 5.500h3l5-5.500M-4 5.500l5-5.500M9 5.500L4 0" fill="none" stroke="#8890a0" stroke-width=".6"/><path d="M-11.500 -1h5.500v-2.200l4.700 3.600-4.700 3.600v-2.200h-5.500z" fill="#3a78d0" stroke="#12308a" stroke-width=".8"/><path d="M-10.500 0.400h6" stroke="#7ab8e8" stroke-width=".8"/></g><rect x="286.25" y="260.25" width="24.500" height="21.500" rx="2.500" fill="url(#bx)" stroke="#9a9a9a" stroke-width="1.100"/><path d="M289 280.75h19a2.500 2.500 0 0 0 2.500-2.500v-15" fill="none" stroke="#b0b0b0" stroke-width="1"/><path d="M286.25 279.25v-17a2.500 2.500 0 0 1 2.500-2.500h19" fill="none" stroke="#e2e2e2" stroke-width="1"/><g transform="translate(298.5,271)"><rect x="-4.500" y="-9" width="9" height="7" fill="#fff" stroke="#444" stroke-width=".9"/><path d="M-4.500 -9l4.500 3.500 4.500-3.500" fill="none" stroke="#666" stroke-width=".6"/><path d="M-7.500 -1.300h15l-6 5v5h-3v-5z" fill="#968e50" stroke="#45401a" stroke-width=".8"/><path d="M-5.500 -0.600h6l-2.500 2.300z" fill="#cfcb98"/></g><rect x="286.25" y="330.95" width="24.500" height="21.500" rx="2.500" fill="url(#bx)" stroke="#9a9a9a" stroke-width="1.100"/><path d="M289 351.45h19a2.500 2.500 0 0 0 2.500-2.500v-15" fill="none" stroke="#b0b0b0" stroke-width="1"/><path d="M286.25 349.95v-17a2.500 2.500 0 0 1 2.500-2.500h19" fill="none" stroke="#e2e2e2" stroke-width="1"/><g transform="translate(298.5,341.7)"><circle cx="1.500" cy="-1" r="7" fill="#1e5abc" stroke="#0e2a60" stroke-width=".9"/><path d="M-2.500 -6.500c2.500-1.500 5.500-.8 6 1s-1 3-2.500 4-3.500 2.500-4.500 1-.8-4.500 1-6zM2.500 1c1.500-1 5 0 5 1.500S5 6 3.500 5.500 1.500 2 2.500 1z" fill="#48a83c"/><path d="M-1 -6c1-.5 2.500-.5 3 .3s-1 1.500-2 1.800-1.800-1.300-1-2.100z" fill="#b8e0a0"/><circle cx="-1.500" cy="-4.500" r="1.800" fill="#fff" opacity=".45"/><path d="M-9 8.500l5-5M-9 8.500v-3.800M-9 8.500h3.800" stroke="#0a2490" stroke-width="1.700" fill="none"/></g><rect x="497.75" y="111.45" width="24.500" height="21.500" rx="2.500" fill="url(#bx)" stroke="#9a9a9a" stroke-width="1.100"/><path d="M500.5 131.95h19a2.500 2.500 0 0 0 2.500-2.500v-15" fill="none" stroke="#b0b0b0" stroke-width="1"/><path d="M497.75 130.45v-17a2.500 2.500 0 0 1 2.500-2.500h19" fill="none" stroke="#e2e2e2" stroke-width="1"/><g transform="translate(510,122.2)"><path d="M-0.500 -9.500V-5.800M-5.500 -0.800H-8.700V7M4.500 -0.800H7.800V7" fill="none" stroke="#1a2a6a" stroke-width="1.100"/><path d="M-10.700 5.800l2 3 2-3zM5.800 5.800l2 3 2-3z" fill="#1a2a6a"/><path d="M-0.500 -5.800l5 5-5 5-5-5z" fill="#2e74c4" stroke="#12306a" stroke-width=".8"/><path d="M-3.800 -0.800l3.300-3.500 2 2-3.500 3.300z" fill="#58a4d8"/></g><rect x="410.05" y="183.75" width="24.500" height="21.500" rx="2.500" fill="url(#bx)" stroke="#9a9a9a" stroke-width="1.100"/><path d="M412.8 204.25h19a2.500 2.500 0 0 0 2.500-2.500v-15" fill="none" stroke="#b0b0b0" stroke-width="1"/><path d="M410.05 202.75v-17a2.500 2.500 0 0 1 2.500-2.500h19" fill="none" stroke="#e2e2e2" stroke-width="1"/><g transform="translate(422.3,194.5)"><rect x="-4.500" y="-9" width="9" height="7" fill="#fff" stroke="#444" stroke-width=".9"/><path d="M-4.500 -9l4.500 3.500 4.500-3.500" fill="none" stroke="#666" stroke-width=".6"/><path d="M-7.500 -1.300h15l-6 5v5h-3v-5z" fill="#968e50" stroke="#45401a" stroke-width=".8"/><path d="M-5.500 -0.600h6l-2.500 2.300z" fill="#cfcb98"/></g><rect x="561.95" y="183.25" width="24.500" height="21.500" rx="2.500" fill="url(#bx)" stroke="#9a9a9a" stroke-width="1.100"/><path d="M564.7 203.75h19a2.500 2.500 0 0 0 2.500-2.500v-15" fill="none" stroke="#b0b0b0" stroke-width="1"/><path d="M561.95 202.25v-17a2.500 2.500 0 0 1 2.500-2.500h19" fill="none" stroke="#e2e2e2" stroke-width="1"/><g transform="translate(574.2,194)"><rect x="-4.500" y="-9" width="9" height="7" fill="#fff" stroke="#444" stroke-width=".9"/><path d="M-4.500 -9l4.500 3.500 4.500-3.500" fill="none" stroke="#666" stroke-width=".6"/><path d="M-7.500 -1.300h15l-6 5v5h-3v-5z" fill="#968e50" stroke="#45401a" stroke-width=".8"/><path d="M-5.500 -0.600h6l-2.500 2.300z" fill="#cfcb98"/></g><rect x="561.95" y="259.55" width="24.500" height="21.500" rx="2.500" fill="url(#bx)" stroke="#9a9a9a" stroke-width="1.100"/><path d="M564.7 280.05h19a2.500 2.500 0 0 0 2.500-2.500v-15" fill="none" stroke="#b0b0b0" stroke-width="1"/><path d="M561.95 278.55v-17a2.500 2.500 0 0 1 2.500-2.500h19" fill="none" stroke="#e2e2e2" stroke-width="1"/><g transform="translate(574.2,270.3)"><circle cx="1.500" cy="-1" r="7" fill="#1e5abc" stroke="#0e2a60" stroke-width=".9"/><path d="M-2.500 -6.500c2.500-1.500 5.500-.8 6 1s-1 3-2.500 4-3.500 2.500-4.500 1-.8-4.500 1-6zM2.500 1c1.500-1 5 0 5 1.500S5 6 3.500 5.500 1.500 2 2.500 1z" fill="#48a83c"/><path d="M-1 -6c1-.5 2.500-.5 3 .3s-1 1.500-2 1.800-1.800-1.300-1-2.100z" fill="#b8e0a0"/><circle cx="-1.500" cy="-4.500" r="1.800" fill="#fff" opacity=".45"/><path d="M-9 8.500l5-5M-9 8.500v-3.800M-9 8.500h3.800" stroke="#0a2490" stroke-width="1.700" fill="none"/></g><rect x="561.95" y="331.25" width="24.500" height="21.500" rx="2.500" fill="url(#bx)" stroke="#9a9a9a" stroke-width="1.100"/><path d="M564.7 351.75h19a2.500 2.500 0 0 0 2.500-2.500v-15" fill="none" stroke="#b0b0b0" stroke-width="1"/><path d="M561.95 350.25v-17a2.500 2.500 0 0 1 2.500-2.500h19" fill="none" stroke="#e2e2e2" stroke-width="1"/><g transform="translate(574.2,342)"><rect x="-4.500" y="-9" width="9" height="7" fill="#fff" stroke="#444" stroke-width=".9"/><path d="M-4.500 -9l4.500 3.500 4.500-3.500" fill="none" stroke="#666" stroke-width=".6"/><path d="M-7.500 -1.300h15l-6 5v5h-3v-5z" fill="#968e50" stroke="#45401a" stroke-width=".8"/><path d="M-5.500 -0.600h6l-2.500 2.300z" fill="#cfcb98"/></g><rect x="561.95" y="404.05" width="24.500" height="21.500" rx="2.500" fill="url(#bx)" stroke="#9a9a9a" stroke-width="1.100"/><path d="M564.7 424.55h19a2.500 2.500 0 0 0 2.500-2.500v-15" fill="none" stroke="#b0b0b0" stroke-width="1"/><path d="M561.95 423.05v-17a2.500 2.500 0 0 1 2.500-2.500h19" fill="none" stroke="#e2e2e2" stroke-width="1"/><g transform="translate(574.2,414.8)"><rect x="-10" y="-5.500" width="12.500" height="11" fill="#fff" stroke="#333" stroke-width="1.100"/><path d="M-10 -5.500l4.800 5.500h3l4.700-5.500M-10 5.500l4.800-5.500M2.500 5.500l-4.700-5.500" fill="none" stroke="#8890a0" stroke-width=".6"/><path d="M1.500 -1h4.500v-2.200l4.700 3.600-4.700 3.600v-2.200h-4.500z" fill="#3a78d0" stroke="#12308a" stroke-width=".8"/><path d="M2.500 0.400h5.500" stroke="#7ab8e8" stroke-width=".8"/></g><rect x="410.05" y="406.45" width="24.500" height="21.500" rx="2.500" fill="url(#bx)" stroke="#9a9a9a" stroke-width="1.100"/><path d="M412.8 426.95h19a2.500 2.500 0 0 0 2.500-2.500v-15" fill="none" stroke="#b0b0b0" stroke-width="1"/><path d="M410.05 425.45v-17a2.500 2.500 0 0 1 2.500-2.500h19" fill="none" stroke="#e2e2e2" stroke-width="1"/><g transform="translate(422.3,417.2)"><rect x="-10" y="-5.500" width="12.500" height="11" fill="#fff" stroke="#333" stroke-width="1.100"/><path d="M-10 -5.500l4.800 5.500h3l4.700-5.500M-10 5.500l4.800-5.500M2.500 5.500l-4.700-5.500" fill="none" stroke="#8890a0" stroke-width=".6"/><path d="M1.500 -1h4.500v-2.200l4.700 3.600-4.700 3.600v-2.200h-4.500z" fill="#3a78d0" stroke="#12308a" stroke-width=".8"/><path d="M2.500 0.400h5.500" stroke="#7ab8e8" stroke-width=".8"/></g><rect x="506.95" y="472.55" width="24.500" height="21.500" rx="2.500" fill="url(#bx)" stroke="#9a9a9a" stroke-width="1.100"/><path d="M509.7 493.05h19a2.500 2.500 0 0 0 2.500-2.500v-15" fill="none" stroke="#b0b0b0" stroke-width="1"/><path d="M506.95 491.55v-17a2.500 2.500 0 0 1 2.500-2.500h19" fill="none" stroke="#e2e2e2" stroke-width="1"/><g transform="translate(519.2,483.3)"><path d="M-9.500 -9V-1.100H-6M9 -9V-1.100H5.500M-0.400 3.700V7.500" fill="none" stroke="#1a2a6a" stroke-width="1.100"/><path d="M-7.800 -3.100l2.600 2-2.600 2zM7 -3.100l-2.600 2 2.600 2zM-2.300 5.800l1.900 2.800 1.900-2.800z" fill="#1a2a6a"/><path d="M-0.400 -5.900l4.800 4.800-4.800 4.800-4.800-4.800z" fill="#2e74c4" stroke="#12306a" stroke-width=".8"/><path d="M-3.600 -1.100l3.200-3.400 2 2-3.400 3.200z" fill="#58a4d8"/></g></svg>
<span class="t" style="left:289px;top:136.455px;font-size:9.3px;line-height:12.09px;color:#000;transform:scaleX(0.952);-webkit-text-stroke:0.15px #000;">開始</span>
<span class="t" style="left:288.8px;top:208.655px;font-size:9.3px;line-height:12.09px;color:#000;transform:scaleX(0.952);-webkit-text-stroke:0.15px #000;">受付</span>
<span class="t" style="left:265px;top:284.655px;font-size:9.3px;line-height:12.09px;color:#000;-webkit-text-stroke:0.15px #000;">在庫引当前処理</span>
<span class="t" style="left:279.2px;top:355.255px;font-size:9.3px;line-height:12.09px;color:#000;transform:scaleX(0.990);-webkit-text-stroke:0.15px #000;">在庫引当</span>
<span class="t" style="left:287.8px;top:497.055px;font-size:9.3px;line-height:12.09px;color:#000;transform:scaleX(0.957);-webkit-text-stroke:0.15px #000;">終了</span>
<span class="t" style="left:469.8px;top:135.955px;font-size:9.3px;line-height:12.09px;color:#000;-webkit-text-stroke:0.15px #000;">在庫引当結果<span class="k" style="transform:scaleX(0.554);margin-right:-19.91px;-webkit-text-stroke:0.27px currentColor">チェック</span>
</span><span class="t" style="left:395px;top:207.555px;font-size:9.3px;line-height:12.09px;color:#000;-webkit-text-stroke:0.15px #000;">在庫<span class="k" style="transform:scaleX(0.709);margin-right:-6.50px;-webkit-text-stroke:0.17px currentColor">なし</span>設定</span>
<span class="t" style="left:539.7px;top:208.055px;font-size:9.3px;line-height:12.09px;color:#000;transform:scaleX(1.016);-webkit-text-stroke:0.15px #000;">配送手配前処理</span>
<span class="t" style="left:554.7px;top:284.655px;font-size:9.3px;line-height:12.09px;color:#000;-webkit-text-stroke:0.15px #000;">配送手配</span>
<span class="t" style="left:544.6px;top:355.255px;font-size:9.3px;line-height:12.09px;color:#000;transform:scaleX(1.015);-webkit-text-stroke:0.15px #000;">配送番号設定</span>
<span class="t" style="left:542.8px;top:428.355px;font-size:9.3px;line-height:12.09px;color:#000;-webkit-text-stroke:0.15px #000;">応答_手配成功</span>
<span class="t" style="left:382.8px;top:429.855px;font-size:9.3px;line-height:12.09px;color:#000;-webkit-text-stroke:0.15px #000;">応答_在庫<span class="k" style="transform:scaleX(0.630);margin-right:-20.64px;-webkit-text-stroke:0.22px currentColor">なしエラー</span>
</span><span class="t" style="left:469.1px;top:496.755px;font-size:9.3px;line-height:12.09px;color:#000;-webkit-text-stroke:0.15px #000;">在庫引当結果<span class="k" style="transform:scaleX(0.563);margin-right:-19.50px;-webkit-text-stroke:0.26px currentColor">チェック</span>終了</span>
</body></html>
